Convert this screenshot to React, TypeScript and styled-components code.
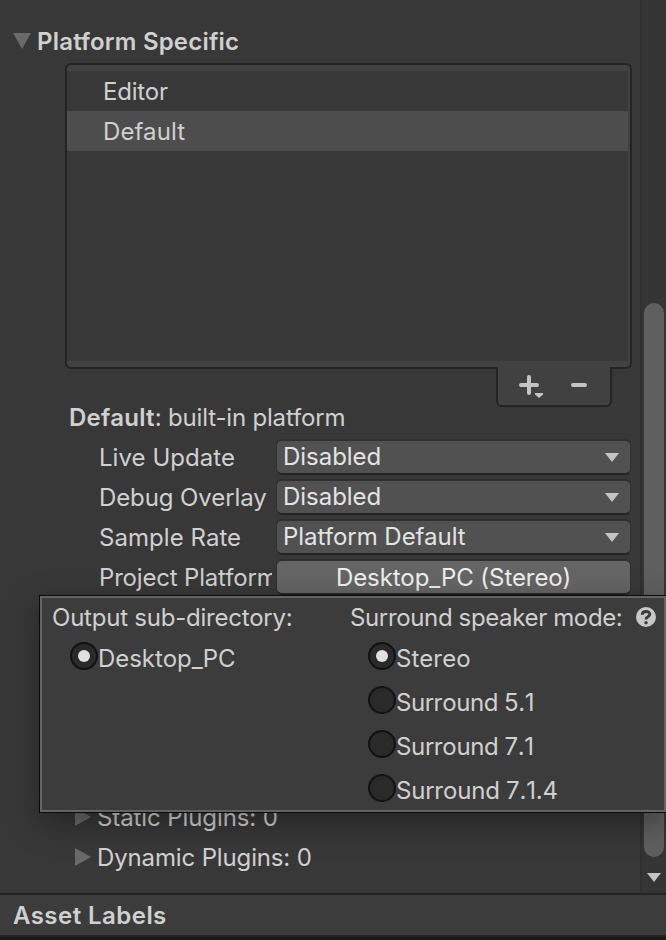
import React from "react";
import styled, { createGlobalStyle } from "styled-components";

const GlobalStyle = createGlobalStyle`
  *, *::before, *::after { box-sizing: border-box; }
  body {
    margin: 0;
    background: #383838;
    overflow: hidden;
  }
`;

const Window = styled.div`
  position: relative;
  display: flex;
  flex-direction: column;
  width: 666px;
  height: 940px;
  overflow: hidden;
  background: #383838;
  color: #d0d0d0;
  font-family: Inter, "Liberation Sans", sans-serif;
  font-size: 24px;
  line-height: 42px;
  white-space: nowrap;
`;

const Label = styled.span<{ $track?: number }>`
  letter-spacing: ${(p) => p.$track ?? 0}px;
`;

const Body = styled.div`
  display: flex;
  height: 893px;
`;

const Inspector = styled.main`
  display: flex;
  flex-direction: column;
  width: 640px;
  padding-top: 21px;
`;

const Foldout = styled.div<{ $indent: number; $bold?: boolean }>`
  display: flex;
  align-items: flex-start;
  gap: 6px;
  height: 40px;
  padding-left: ${(p) => p.$indent}px;
  font-weight: ${(p) => (p.$bold ? 600 : 400)};
  svg {
    flex: none;
    align-self: center;
  }
`;

const ListBox = styled.div`
  width: 567px;
  height: 306px;
  margin: 2px 0 0 65px;
  padding: 6px 2px 6px 0;
  border: 2px solid #242424;
  border-radius: 6px;
  background: #414141;
`;

const ListItems = styled.div`
  height: 290px;
  background: #383838;
`;

const ListItem = styled.div<{ $selected?: boolean }>`
  height: 40px;
  padding-left: 36px;
  background: ${(p) => (p.$selected ? "#4d4d4d" : "transparent")};
`;

const ListFooter = styled.div`
  display: flex;
  width: 116px;
  height: 40px;
  margin: -2px 0 0 496px;
  border: 2px solid #242424;
  border-top: 0;
  border-radius: 0 0 6px 6px;
  background: #414141;
  position: relative;
`;

const PlatformTitle = styled.div`
  height: 40px;
  margin-top: -10px;
  padding-left: 69px;
  strong {
    font-weight: 600;
    letter-spacing: 0.25px;
  }
`;

const Field = styled.div`
  display: flex;
  height: 40px;
  padding-left: 99px;
`;

const FieldLabel = styled.div`
  width: 173px;
  margin-right: 4px;
  overflow: hidden;
`;

const Control = styled.div<{ $button?: boolean }>`
  display: flex;
  flex: none;
  align-items: center;
  justify-content: ${(p) => (p.$button ? "center" : "space-between")};
  width: 355px;
  height: 36px;
  margin-top: 2px;
  padding: ${(p) => (p.$button ? "2px 0 0 0" : "0 11px 0 6px")};
  border: 2px solid #303030;
  border-right-width: 1px;
  border-left-width: 1px;
  border-bottom-color: #242424;
  border-radius: 6px;
  background: ${(p) => (p.$button ? "#656565" : "#515151")};
  color: ${(p) => (p.$button ? "#eeeeee" : "#e4e4e4")};
`;

const Plugins = styled.section`
  margin-top: 200px;
`;

const Scrollbar = styled.div`
  display: flex;
  flex-direction: column;
  align-items: center;
  width: 26px;
  padding-top: 303px;
  border-left: 2px solid #303030;
  background: #353535;
`;

const Thumb = styled.div`
  width: 20px;
  height: 554px;
  margin-bottom: 16px;
  border-radius: 10px;
  background: #5f5f5f;
`;

const AssetLabels = styled.footer`
  height: 47px;
  padding-left: 13px;
  border-top: 2px solid #242424;
  border-bottom: 3px solid #191919;
  background: linear-gradient(#3c3c3c 40px, #242424 40px);
  font-weight: 600;
`;

const Popup = styled.div`
  position: absolute;
  left: 39px;
  top: 595px;
  display: flex;
  width: 628px;
  height: 218px;
  border: 1px solid #0a0a0a;
  background: #3c3c3c;
  box-shadow: inset 0 0 0 2px #646464, 0 10px 30px rgba(0, 0, 0, 0.36);
`;

const Choices = styled.div<{ $width: number }>`
  width: ${(p) => p.$width}px;
  padding: 2px 0 0 12px;
`;

const ChoicesTitle = styled.div`
  display: flex;
  justify-content: space-between;
  height: 38px;
  padding-right: 9px;
  line-height: 40px;
  svg { align-self: center; }
`;

const RadioRow = styled.div`
  display: flex;
  height: 44px;
  padding-left: 18px;
  line-height: 46px;
  font-kerning: none;
  word-spacing: -0.5px;
`;

const Radio = styled.div`
  display: grid;
  place-items: center;
  width: 28px;
  height: 28px;
  margin-top: 6px;
  border: 2px solid #121212;
  border-radius: 50%;
  background: #2a2a2a;
`;

const Dot = styled.div`
  width: 12px;
  height: 12px;
  border-radius: 50%;
  background: #e0e0e0;
`;

const ArrowDown = () => (
  <svg width="14" height="9" viewBox="0 0 14 9">
    <path d="M0 0H14L7 9Z" fill="#c4c4c4" />
  </svg>
);

const FoldedArrow = () => (
  <svg width="16" height="18" viewBox="0 0 16 18">
    <path d="M0 0L16 9L0 18Z" fill="#6a6a6a" />
  </svg>
);

const Option = ({ label, track, checked }: { label: string; track: number; checked?: boolean }) => (
  <RadioRow>
    <Radio>{checked && <Dot />}</Radio>
    <Label $track={track}>{label}</Label>
  </RadioRow>
);

const fields = [
  { label: "Live Update", track: 0.05, value: "Disabled" },
  { label: "Debug Overlay", track: -0.1, value: "Disabled" },
  { label: "Sample Rate", track: 0.05, value: "Platform Default" },
];

export default function App() {
  return (
    <Window>
      <GlobalStyle />
      <Body>
        <Inspector>
          <Foldout $indent={13} $bold>
            <svg width="18" height="16" viewBox="0 0 18 16">
              <path d="M0 0H18L9 16Z" fill="#6a6a6a" />
            </svg>
            <Label $track={0.2}>Platform Specific</Label>
          </Foldout>
          <ListBox>
            <ListItems>
              <ListItem>
                <Label $track={-0.2}>Editor</Label>
              </ListItem>
              <ListItem $selected>
                <Label $track={0.1}>Default</Label>
              </ListItem>
            </ListItems>
          </ListBox>
          <ListFooter>
            <svg width="112" height="38" viewBox="0 0 112 38">
              <path d="M31 10V26M23 18H39M75 18H87" stroke="#c4c4c4" strokeWidth="4" strokeLinecap="round" />
              <path d="M37 26H45V27.5L41 31L37 27.5Z" fill="#c4c4c4" />
            </svg>
          </ListFooter>
          <PlatformTitle>
            <strong>Default</strong>
            <Label $track={-0.18}>: built-in platform</Label>
          </PlatformTitle>
          {fields.map(({ label, track, value }) => (
            <Field key={label}>
              <FieldLabel>
                <Label $track={track}>{label}</Label>
              </FieldLabel>
              <Control>
                <Label $track={-0.03}>{value}</Label>
                <ArrowDown />
              </Control>
            </Field>
          ))}
          <Field>
            <FieldLabel>
              <Label $track={-0.18}>Project Platform</Label>
            </FieldLabel>
            <Control $button>
              <Label $track={-0.07}>Desktop_PC (Stereo)</Label>
            </Control>
          </Field>
          <Plugins>
            <Foldout $indent={75}>
              <FoldedArrow />
              <Label $track={-0.1}>Static Plugins: 0</Label>
            </Foldout>
            <Foldout $indent={75}>
              <FoldedArrow />
              <Label $track={-0.14}>Dynamic Plugins: 0</Label>
            </Foldout>
          </Plugins>
        </Inspector>
        <Scrollbar>
          <Thumb />
          <ArrowDown />
        </Scrollbar>
      </Body>
      <AssetLabels>
        <Label $track={0.45}>Asset Labels</Label>
      </AssetLabels>
      <Popup>
        <Choices $width={298}>
          <ChoicesTitle>
            <Label $track={-0.22}>Output sub-directory:</Label>
          </ChoicesTitle>
          <Option label="Desktop_PC" track={-0.05} checked />
        </Choices>
        <Choices $width={327}>
          <ChoicesTitle>
            <Label $track={-0.36}>Surround speaker mode:</Label>
            <svg width="20" height="20" viewBox="0 0 20 20">
              <circle cx="10" cy="10" r="10" fill="#c8c8c8" />
              <path d="M6.2 7.8C6.2 3.4 13.9 3.5 13.8 7.3C13.7 9.9 10 9.7 10 12.5" fill="none" stroke="#3c3c3c" strokeWidth="2.9" />
              <circle cx="10" cy="15.7" r="1.7" fill="#3c3c3c" />
            </svg>
          </ChoicesTitle>
          <Option label="Stereo" track={0} checked />
          <Option label="Surround 5.1" track={-0.38} />
          <Option label="Surround 7.1" track={-0.33} />
          <Option label="Surround 7.1.4" track={-0.15} />
        </Choices>
      </Popup>
    </Window>
  );
}
